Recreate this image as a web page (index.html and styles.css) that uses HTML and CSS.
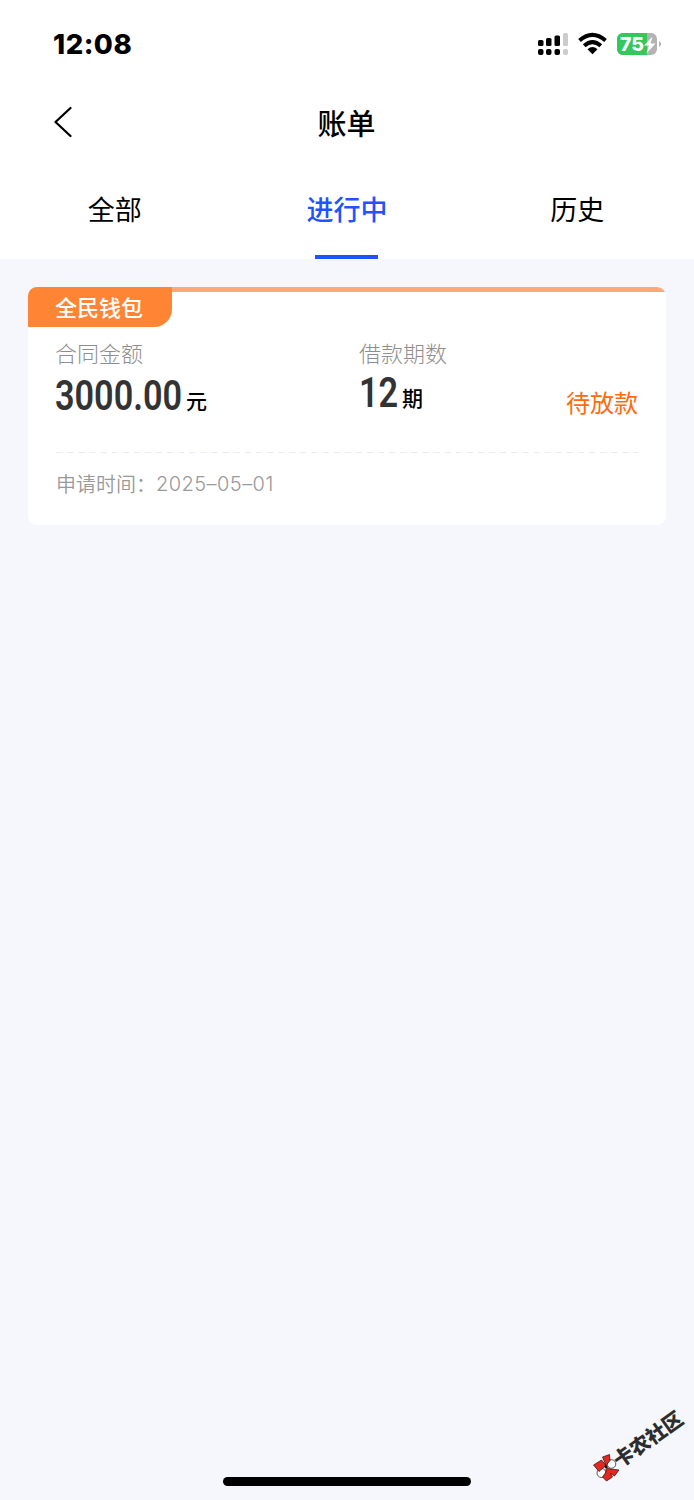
FILE: index.html
```html
<!DOCTYPE html>
<html lang="zh-CN">
<head>
<meta charset="utf-8">
<title>账单</title>
<link rel="stylesheet" href="styles.css">
</head>
<body>
<div class="screen">
  <header class="top">
    <div class="status">
      <span class="time">12:08</span>
      <svg class="status-icons" width="126" height="26" viewBox="536 31 126 26">
        <g fill="#000">
          <rect x="538" y="40" width="5.500" height="6" rx="1.500"/>
          <rect x="546" y="38" width="5.500" height="8" rx="1.500"/>
          <rect x="554.5" y="35.500" width="5.500" height="10.500" rx="1.500"/>
          <rect x="538" y="49" width="5.500" height="6" rx="2"/>
          <rect x="546" y="49" width="5.500" height="6" rx="2"/>
          <rect x="554.5" y="49" width="5.500" height="6" rx="2"/>
        </g>
        <g fill="#ccc">
          <rect x="563" y="33" width="5" height="13" rx="1.500"/>
          <rect x="563" y="49" width="5" height="6" rx="2"/>
        </g>
        <g fill="none" stroke="#000" stroke-width="4">
          <path d="M579.5 40.6Q592.5 29.3 605.5 40.6"/>
          <path d="M584.2 45.8Q592.5 38.400 600.8 45.8"/>
        </g>
        <path d="M592.5 54.200L587.500 49.200Q592.5 45 597.500 49.200Z"/>
        <rect x="617" y="33" width="40" height="22" rx="6" fill="#b3b3b3"/>
        <path d="M623 33H647V55H623A6 6 0 0 1 617 49V39A6 6 0 0 1 623 33Z" fill="#34c759"/>
        <path d="M659 41Q663.500 44 659 47Z" fill="#b3b3b3"/>
        <text class="battery-level" x="620" y="51" textLength="24" lengthAdjust="spacingAndGlyphs">75</text>
        <path d="M652.500 36.500L644 45.500H649L646.500 53.500L655.500 43.500H650.500Z" fill="#fff"/>
      </svg>
    </div>
    <div class="nav">
      <svg class="back" width="20" height="32" viewBox="0 0 20 32"><path d="M17.500 2L2.500 16L17.500 30" fill="none" stroke="#000" stroke-width="2.300" stroke-linecap="round" stroke-linejoin="round"/></svg>
      <h1 class="title">账单</h1>
    </div>
    <nav class="tabs">
      <span class="tab">全部</span>
      <span class="tab active">进行中</span>
      <span class="tab">历史</span>
    </nav>
  </header>
  <main class="content">
    <section class="card">
      <div class="stripe"><span class="lender">全民钱包</span></div>
      <div class="details">
        <div class="amount">
          <div class="label">合同金额</div>
          <div class="value"><span class="num">3000.00</span><span class="unit">元</span></div>
        </div>
        <div class="term">
          <div class="label">借款期数</div>
          <div class="value"><span class="num num-term">12</span><span class="unit unit-term">期</span></div>
        </div>
        <div class="state">待放款</div>
      </div>
      <svg class="divider" width="582" height="2"><path d="M0 0.500H582" stroke="#ebe9f4" stroke-width="1" stroke-dasharray="6.500 4.600"/></svg>
      <div class="applied"><span>申请时间：</span><span class="date">2025–05–01</span></div>
    </section>
  </main>
  <div class="home-bar"></div>
  <div class="watermark">
    <svg width="28" height="28" viewBox="0 0 28 28">
      <g stroke="#16120f" stroke-width="0.700">
        <circle cx="18.500" cy="10" r="4.300" fill="#fff"/>
        <circle cx="8.500" cy="19" r="4.500" fill="#fff"/>
        <path d="M0.500 11L8.500 6L13 11.500L6 17.500Z" fill="#e4281f"/>
        <path d="M9.500 3L16.500 0.500L17 6.500L13 11.500Z" fill="#e4281f"/>
        <path d="M13 13L17 15L26 16L21.500 22L17.500 19.500L19.500 23L13.500 27L9.500 23L13 18Z" fill="#e4281f"/>
      </g>
      <circle cx="13" cy="12.500" r="1.500" fill="#111"/>
    </svg>
    <span class="watermark-text">卡农社区</span>
  </div>
</div>
</body>
</html>
```

FILE: styles.css
```css
* { box-sizing: border-box; }
body {
  margin: 0;
  font-family: "Noto Sans CJK SC", sans-serif;
  color: #000;
}
.screen {
  position: relative;
  width: 694px;
  height: 1500px;
  overflow: hidden;
  background: #f5f7fc;
}
.top { height: 259px; background: #fff; }
.status {
  display: flex;
  justify-content: space-between;
  align-items: center;
  height: 88px;
  padding: 0 32px 0 53px;
}
.time {
  font: 800 27.500px/32px Inter, sans-serif;
  letter-spacing: .5px;
}
.battery-level { font: 800 19px Inter, sans-serif; fill: #fff; }
.nav {
  display: grid;
  grid-template-columns: 80px 1fr 80px;
  align-items: center;
  height: 68px;
}
.back { margin-left: 53px; }
.title {
  margin: 0 1px 1px 0;
  text-align: center;
  font-size: 29px;
  line-height: 40px;
  font-weight: 500;
}
.tabs {
  display: grid;
  grid-template-columns: repeat(3, 1fr);
  height: 103px;
}
.tab {
  display: flex;
  flex-direction: column;
  align-items: center;
  justify-content: space-between;
  padding: 33px 2px 0 0;
  font-size: 27px;
  line-height: 40px;
}
.active { padding-right: 0; color: #1e53ff; font-weight: 500; }
.active::after {
  content: "";
  width: 63px;
  height: 4px;
  background: #1e53ff;
}
.content { padding: 28px; }
.card {
  height: 238px;
  overflow: hidden;
  border-radius: 9px;
  background: #fff;
}
.stripe {
  height: 40px;
  background: linear-gradient(#ffa873 5px, transparent 5px);
}
.lender {
  display: block;
  width: 144px;
  height: 40px;
  padding-left: 27px;
  border-bottom-right-radius: 18px;
  background: #ff8534;
  color: #fff;
  font-size: 22px;
  line-height: 38px;
  font-weight: 500;
}
.details {
  display: grid;
  grid-template-columns: 304px 1fr auto;
  height: 125px;
  padding: 9px 28px 0 27px;
}
.label {
  color: #8e8e8e;
  font-size: 22px;
  line-height: 32px;
  font-weight: 300;
}
.value { display: flex; align-items: baseline; padding-top: 3px; }
.num {
  width: 127px;
  color: #333;
  font: 600 42px/50px Roboto, sans-serif;
  transform: scaleX(.815);
  transform-origin: left;
}
.num-term { width: 38px; line-height: 44px; }
.unit { margin-left: 4px; font-size: 21px; line-height: 32px; font-weight: 500; transform: translateY(-1px); }
.unit-term { margin-left: 5px; }
.state {
  padding-top: 48px;
  color: #ff6a0a;
  font-size: 24px;
  line-height: 36px;
}
.divider { display: block; margin-left: 28px; }
.applied {
  display: flex;
  padding: 15px 28px 0;
  color: #999;
  font-size: 20px;
  line-height: 30px;
  font-weight: 350;
}
.date { font-family: Inter, sans-serif; font-weight: 350; letter-spacing: .45px; }
.home-bar {
  position: absolute;
  left: 223px;
  bottom: 14px;
  width: 248px;
  height: 9px;
  border-radius: 5px;
  background: #000;
}
.watermark {
  position: absolute;
  left: 593px;
  top: 1454px;
}
.watermark-text {
  position: absolute;
  left: 22px;
  top: -4px;
  white-space: nowrap;
  color: #2d2d2d;
  font-size: 20px;
  line-height: 24px;
  font-weight: 900;
  transform: rotate(-35.5deg);
  transform-origin: 0 50%;
}
```
